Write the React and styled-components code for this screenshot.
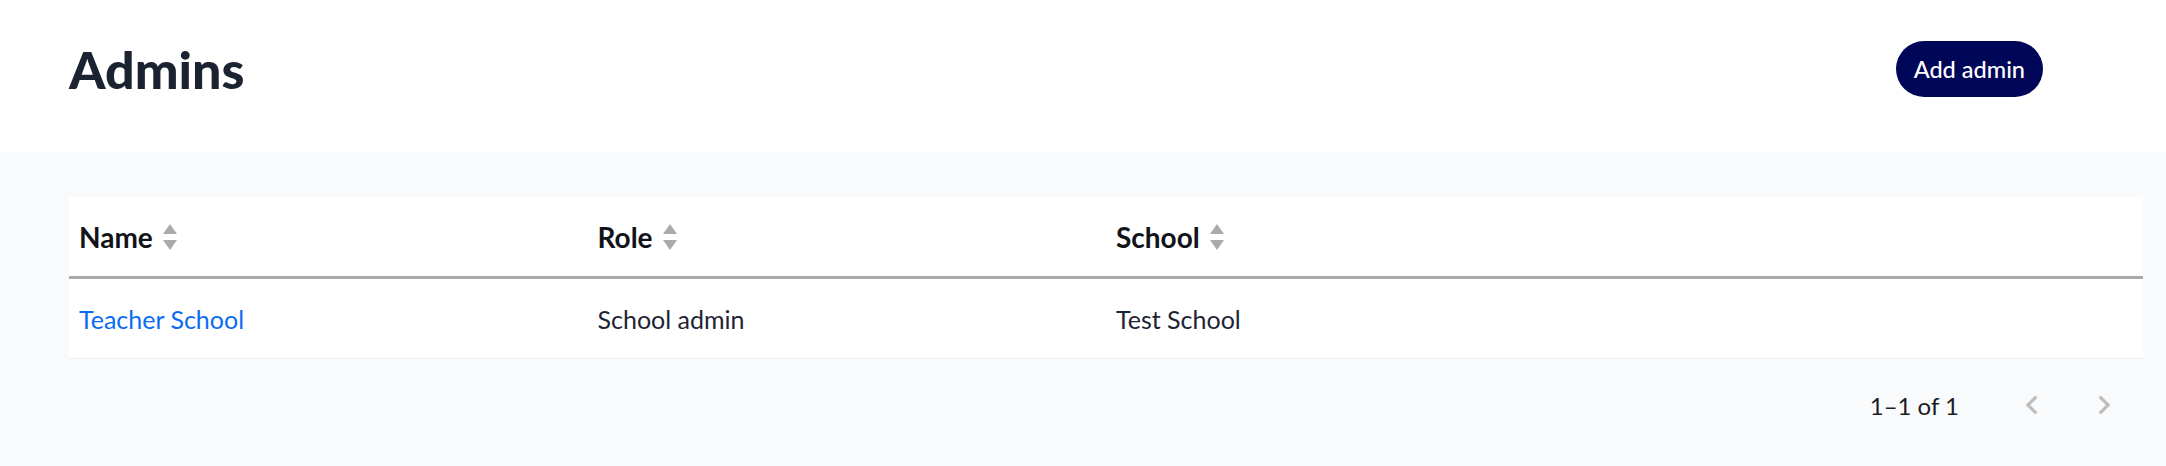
import React from 'react'
import styled, { createGlobalStyle } from 'styled-components'

const GlobalStyle = createGlobalStyle`
  html, body {
    margin: 0;
    padding: 0;
    background: #ffffff;
    font-family: Lato, "Open Sans", sans-serif;
  }
`

const admins = [
  { name: 'Teacher School', role: 'School admin', school: 'Test School' },
]

const columns = [
  { key: 'name', label: 'Name', width: '25%' },
  { key: 'role', label: 'Role', width: '25%' },
  { key: 'school', label: 'School', width: '50%' },
]

function SortIcon() {
  return (
    <SortSvg viewBox="0 0 14 26" aria-hidden="true">
      <path d="M7 0 L14 10 L0 10 Z" />
      <path d="M7 26 L14 16 L0 16 Z" />
    </SortSvg>
  )
}

function Chevron({ dir }) {
  return (
    <ChevronSvg viewBox="0 0 24 24" aria-hidden="true">
      {dir === 'left'
        ? <path d="M15.41 7.41L14 6l-6 6 6 6 1.41-1.41L10.83 12z" />
        : <path d="M10 6L8.59 7.41 13.17 12l-4.58 4.59L10 18l6-6z" />}
    </ChevronSvg>
  )
}

export default function App() {
  return (
    <Page>
      <GlobalStyle />
      <Header>
        <Title>Admins</Title>
        <AddButton>Add admin</AddButton>
      </Header>
      <Content>
        <Card>
          <Table>
            <colgroup>
              {columns.map(c => <col key={c.key} style={{ width: c.width }} />)}
            </colgroup>
            <thead>
              <tr>
                {columns.map(c => (
                  <HeadCell key={c.key}>
                    <HeadLabel>
                      {c.label}
                      <SortIcon />
                    </HeadLabel>
                  </HeadCell>
                ))}
              </tr>
            </thead>
            <tbody>
              {admins.map(a => (
                <tr key={a.name}>
                  <Cell><NameLink href="#">{a.name}</NameLink></Cell>
                  <Cell>{a.role}</Cell>
                  <Cell>{a.school}</Cell>
                </tr>
              ))}
            </tbody>
          </Table>
        </Card>
        <Pagination>
          <PageInfo>1–1 of 1</PageInfo>
          <PageActions>
            <PageButton disabled><Chevron dir="left" /></PageButton>
            <PageButton disabled><Chevron dir="right" /></PageButton>
          </PageActions>
        </Pagination>
      </Content>
    </Page>
  )
}

const Page = styled.div`
  width: 2166px;
  min-height: 466px;
  display: flex;
  flex-direction: column;
`

const Header = styled.header`
  height: 152px;
  box-sizing: border-box;
  padding: 41px 123px 0 69px;
  display: flex;
  justify-content: space-between;
  align-items: flex-start;
  background: #ffffff;
`

const Title = styled.h1`
  margin: 0;
  height: 56px;
  display: flex;
  align-items: center;
  font-size: 52px;
  font-weight: 900;
  color: #1b2232;
  letter-spacing: 0;
`

const AddButton = styled.button`
  height: 56px;
  padding: 0 18px;
  border: none;
  border-radius: 28px;
  background: #000759;
  color: #ffffff;
  font-family: Lato, sans-serif;
  font-size: 23.5px;
  font-weight: 500;
  cursor: pointer;
`

const Content = styled.main`
  flex: 1;
  background: #f9fafc;
  padding: 45px 23px 15px 69px;
`

const Card = styled.div`
  background: #ffffff;
`

const Table = styled.table`
  width: 100%;
  border-collapse: collapse;
  table-layout: fixed;
`

const HeadCell = styled.th`
  height: 79px;
  padding: 0 10px;
  text-align: left;
  vertical-align: middle;
  border-bottom: 3px solid #a9a9a9;
  font-size: 28px;
  font-weight: 700;
  color: #111318;
`

const HeadLabel = styled.span`
  display: inline-flex;
  align-items: center;
  gap: 10px;
`

const SortSvg = styled.svg`
  width: 14px;
  height: 26px;
  fill: #aaaaaa;
`

const Cell = styled.td`
  height: 79px;
  padding: 0 10px;
  vertical-align: middle;
  border-bottom: 1px solid #eef1f4;
  font-size: 25px;
  color: #1d2433;
`

const NameLink = styled.a`
  color: #0a6cf2;
  text-decoration: none;
`

const Pagination = styled.div`
  height: 92px;
  display: flex;
  justify-content: flex-end;
  align-items: center;
  padding-right: 3px;
`

const PageInfo = styled.span`
  font-size: 24px;
  color: #1a1d24;
`

const PageActions = styled.div`
  display: flex;
  margin-left: 37px;
`

const PageButton = styled.button`
  width: 72px;
  height: 72px;
  padding: 0;
  border: none;
  background: transparent;
  display: flex;
  align-items: center;
  justify-content: center;
`

const ChevronSvg = styled.svg`
  width: 38px;
  height: 38px;
  fill: #bdbdbd;
`
